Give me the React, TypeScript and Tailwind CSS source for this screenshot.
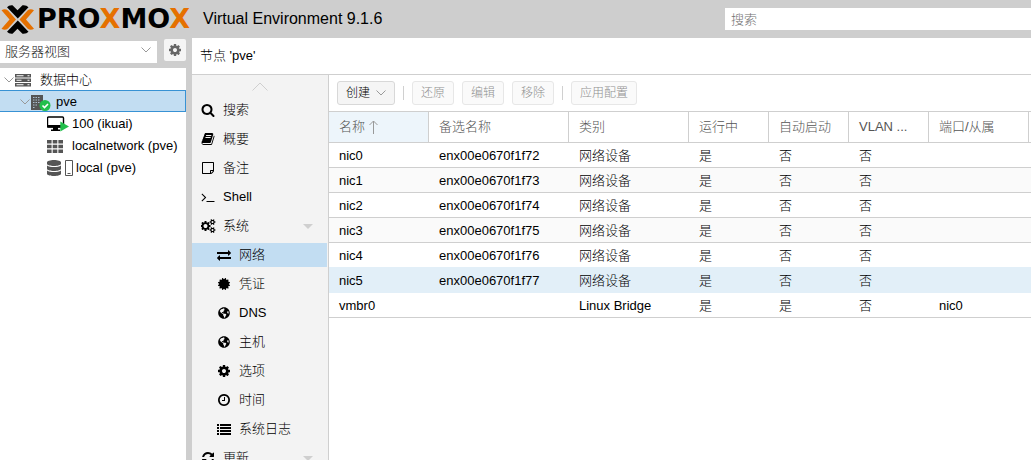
import { useState } from 'react'
import type { ReactNode } from 'react'
import { FaCertificate, FaDatabase, FaGlobeAmericas } from 'react-icons/fa'
import { clsx } from 'clsx'

const paths = {
    search: 'M1216 832q0-185-131.5-316.5t-316.5-131.5-316.5 131.5-131.5 316.5 131.5 316.5 316.5 131.5 316.5-131.5 131.5-316.5zm512 832q0 52-38 90t-90 38q-54 0-90-38l-343-342q-179 124-399 124-143 0-273.5-55.5t-225-150-150-225-55.5-273.5 55.5-273.5 150-225 225-150 273.5-55.5 273.5 55.5 225 150 150 225 55.5 273.5q0 220-124 399l343 343q37 37 37 90z',
    book: 'M1703 478q40 57 18 129l-275 906q-19 64-76.5 107.5t-122.5 43.5h-923q-77 0-148.5-53.5t-99.5-131.5q-24-67-2-127 0-4 3-27t4-37q1-8-3-21.5t-3-19.5q2-11 8-21t16.5-23.5 16.5-23.5q23-38 45-91.5t30-91.5q3-10 .5-30t-.5-28q3-11 17-28t17-23q21-36 42-92t25-90q1-9-2.5-32t.5-28q4-13 22-30.5t22-22.5q19-26 42.5-84.5t27.5-96.5q1-8-3-25.5t-2-26.5q2-8 9-18t18-23 17-21q8-12 16.5-30.5t15-35 16-36 19.5-32 26.5-23.5 36-11.5 47.5 5.5l-1 3q38-9 51-9h761q74 0 114 56t18 130l-274 906q-36 119-71.5 153.5t-128.5 34.5h-869q-27 0-38 15-11 16-1 43 24 70 144 70h923q29 0 56-15.5t35-41.5l300-987q7-22 5-57 38 15 59 43zm-1064 2q-4 13 2 22.5t20 9.5h608q13 0 25.5-9.5t16.5-22.5l21-64q4-13-2-22.5t-20-9.5h-608q-13 0-25.5 9.5t-16.5 22.5zm-83 256q-4 13 2 22.5t20 9.5h608q13 0 25.5-9.5t16.5-22.5l21-64q4-13-2-22.5t-20-9.5h-608q-13 0-25.5 9.5t-16.5 22.5z',
    note: 'M1528 1280h-248v248q29-10 41-22l185-185q12-12 22-41zm-280-128h288v-896h-1280v1280h896v-288q0-40 28-68t68-28zm416-928v1024q0 40-20 88t-48 76l-184 184q-28 28-76 48t-88 20h-1024q-40 0-68-28t-28-68v-1344q0-40 28-68t68-28h1344q40 0 68 28t28 68z',
    terminal: 'M649 983l-466 466q-10 10-23 10t-23-10l-50-50q-10-10-10-23t10-23l393-393-393-393q-10-10-10-23t10-23l50-50q10-10 23-10t23 10l466 466q10 10 10 23t-10 23zm1079 457v64q0 14-9 23t-23 9h-960q-14 0-23-9t-9-23v-64q0-14 9-23t23-9h960q14 0 23 9t9 23z',
    exchange: 'M1792 1184v192q0 13-9.5 22.5t-22.5 9.5h-1376v192q0 13-9.5 22.5t-22.5 9.5q-12 0-24-10l-319-320q-9-9-9-22 0-14 9-23l320-320q9-9 23-9 13 0 22.5 9.5t9.5 22.5v192h1376q13 0 22.5 9.5t9.5 22.5zm0-544q0 14-9 23l-320 320q-9 9-23 9-13 0-22.5-9.5t-9.5-22.5v-192h-1376q-13 0-22.5-9.5t-9.5-22.5v-192q0-13 9.5-22.5t22.5-9.5h1376v-192q0-14 9-23t23-9q12 0 24 10l319 319q9 9 9 23z',
    cog: 'M1152 896q0-106-75-181t-181-75-181 75-75 181 75 181 181 75 181-75 75-181zm512-109v222q0 12-8 23t-20 13l-185 28q-19 54-39 91 35 50 107 138 10 12 10 25t-9 23q-27 37-99 108t-94 71q-12 0-26-9l-138-108q-44 23-91 38-16 136-29 186-7 28-36 28h-222q-14 0-24.5-8.5t-11.5-21.5l-28-184q-49-16-90-37l-141 107q-10 9-25 9-14 0-25-11-126-114-165-168-7-10-7-23 0-12 8-23 15-21 51-66.5t54-70.5q-27-50-41-99l-183-27q-13-2-21-12.5t-8-23.5v-222q0-12 8-23t19-13l186-28q14-46 39-92-40-57-107-138-10-12-10-24 0-10 9-23 26-36 98.5-107.5t94.5-71.5q13 0 26 10l138 107q44-23 91-38 16-136 29-186 7-28 36-28h222q14 0 24.5 8.5t11.5 21.5l28 184q49 16 90 37l142-107q9-9 24-9 13 0 25 10 129 119 165 170 7 8 7 22 0 12-8 23-15 21-51 66.5t-54 70.5q26 50 41 98l183 28q13 2 21 12.5t8 23.5z',
    clock: 'M1024 544v448q0 14-9 23t-23 9h-320q-14 0-23-9t-9-23v-64q0-14 9-23t23-9h224v-352q0-14 9-23t23-9h64q14 0 23 9t9 23zm416 352q0-148-73-273t-198-198-273-73-273 73-198 198-73 273 73 273 198 198 273 73 273-73 198-198 73-273zm224 0q0 209-103 385.5t-279.5 279.5-385.5 103-385.5-103-279.5-279.5-103-385.5 103-385.5 279.5-279.5 385.5-103 385.5 103 279.5 279.5 103 385.5z',
    list: 'M0 256h256v256h-256zM384 256h1408v256h-1408zM0 640h256v256h-256zM384 640h1408v256h-1408zM0 1024h256v256h-256zM384 1024h1408v256h-1408zM0 1408h256v256h-256zM384 1408h1408v256h-1408z',
    refresh: 'M1639 1056q0 5-1 7-64 268-268 434.5t-478 166.5q-146 0-282.5-55t-243.5-157l-129 129q-19 19-45 19t-45-19-19-45v-448q0-26 19-45t45-19h448q26 0 45 19t19 45-19 45l-137 137q71 66 161 102t187 36q134 0 250-65t186-179q11-17 53-117 8-23 30-23h192q13 0 22.5 9.5t9.5 22.5zm25-800v448q0 26-19 45t-45 19h-448q-26 0-45-19t-19-45 19-45l138-138q-148-137-349-137-134 0-250 65t-186 179q-11 17-53 117-8 23-30 23h-199q-13 0-22.5-9.5t-9.5-22.5v-7q65-268 270-434.5t480-166.5q146 0 284 55.5t245 156.5l130-129q19-19 45-19t45 19 19 45z',
}

function Icon({ name, className = 'size-[14px]' }: { name: keyof typeof paths; className?: string }) {
    return (
        <svg viewBox="0 0 1792 1792" fill="currentColor" className={className} aria-hidden="true">
            <path d={paths[name]} />
        </svg>
    )
}

function CogsIcon() {
    return (
        <svg viewBox="0 0 1920 1792" fill="currentColor" className="h-[14px] w-[15px]" aria-hidden="true">
            <path d="M832 896q0-106-75-181t-181-75-181 75-75 181 75 181 181 75 181-75 75-181zm768 512q0-52-38-90t-90-38-90 38-38 90q0 53 37.5 90.5t90.5 37.5 90.5-37.5 37.5-90.5zm0-1024q0-52-38-90t-90-38-90 38-38 90q0 53 37.5 90.5t90.5 37.5 90.5-37.5 37.5-90.5zm-384 421v185q0 10-7 19.5t-16 10.5l-155 24q-11 35-32 76 34 48 90 115 7 11 7 20 0 12-7 19-23 30-82.5 89.5t-78.5 59.5q-11 0-21-7l-115-90q-37 19-77 31-11 108-23 155-7 24-30 24h-186q-11 0-20-7.5t-10-17.5l-23-153q-34-10-75-31l-118 89q-7 7-20 7-11 0-21-8-144-133-144-160 0-9 7-19 10-14 41-53t47-61q-23-44-35-82l-152-24q-10-1-17-9.5t-7-19.5v-185q0-10 7-19.5t16-10.5l155-24q11-35 32-76-34-48-90-115-7-11-7-20 0-12 7-20 22-30 82-89t79-59q11 0 21 7l115 90q34-18 77-32 11-108 23-154 7-24 30-24h186q11 0 20 7.5t10 17.5l23 153q34 10 75 31l118-89q8-7 20-7 11 0 21 8 144 133 144 160 0 8-7 19-12 16-42 54t-45 60q23 48 34 82l152 23q10 2 17 10.5t7 19.5zm640 533v140q0 16-149 31-12 27-30 52 51 113 51 138 0 4-4 7-122 71-124 71-8 0-46-47t-52-68q-20 2-30 2t-30-2q-14 21-52 68t-46 47q-2 0-124-71-4-3-4-7 0-25 51-138-18-25-30-52-149-15-149-31v-140q0-16 149-31 13-29 30-52-51-113-51-138 0-4 4-7 4-2 35-20t59-34 30-16q8 0 46 46.5t52 67.5q20-2 30-2t30 2q51-71 92-112l6-2q4 0 124 70 4 3 4 7 0 25-51 138 17 23 30 52 149 15 149 31zm0-1024v140q0 16-149 31-12 27-30 52 51 113 51 138 0 4-4 7-122 71-124 71-8 0-46-47t-52-68q-20 2-30 2t-30-2q-14 21-52 68t-46 47q-2 0-124-71-4-3-4-7 0-25 51-138-18-25-30-52-149-15-149-31v-140q0-16 149-31 13-29 30-52-51-113-51-138 0-4 4-7 4-2 35-20t59-34 30-16q8 0 46 46.5t52 67.5q20-2 30-2t30 2q51-71 92-112l6-2q4 0 124 70 4 3 4 7 0 25-51 138 17 23 30 52 149 15 149 31z" />
        </svg>
    )
}

function Chevron({ className }: { className?: string }) {
    return (
        <svg viewBox="0 0 10 6" fill="none" stroke="currentColor" className={clsx('shrink-0', className)} aria-hidden="true">
            <path d="M.5.5 5 5 9.5.5" />
        </svg>
    )
}

function Logo() {
    return (
        <a href="#home" aria-label="Proxmox" className="flex w-[203px] shrink-0 items-center">
            <svg viewBox="0 0 36 34" className="h-[34px] w-9 shrink-0" fill="none" aria-hidden="true">
                <path d="M7 5.200Q9 2.800 12.500 3.200L17.500 8.200 22.500 3.200Q26.500 2.800 28.500 5.200L17.800 16.500Z" fill="#000" />
                <path d="M7 29.800Q9 32.200 12.500 31.800L17.500 26.800 22.500 31.800Q26.500 32.200 28.500 29.800L17.800 18.500Z" fill="#000" />
                <path d="M1.500 8.200Q5 6.200 8 8.500L16 17.500 8 26.500Q5 28.800 1.500 26.800L9.500 17.500Z" fill="#e57000" />
                <path d="M34 8.200Q30.500 6.200 27.500 8.500L19.500 17.500 27.500 26.500Q30.500 28.800 34 26.800L26 17.500Z" fill="#e57000" />
            </svg>
            <span className="pl-px font-['DejaVu_Sans',sans-serif] text-[27px] leading-[34px] font-bold text-black">
                PRO<span className="text-[#e57000]">X</span>MO<span className="text-[#e57000]">X</span>
            </span>
        </a>
    )
}

function ServerIcon() {
    return (
        <svg viewBox="0 0 16 14" className="h-[14px] w-4" fill="#555" aria-hidden="true">
            <path d="M0 1h16v3.500H0zM0 5.500h16v3.500H0zM0 10h16v3.500H0z" />
            <path d="M1.500 2.300h7v.9h-7zM1.500 6.800h5v.9h-5zM1.500 11.300h7v.9h-7zM12.500 2.300h2v.9h-2zM12.500 6.800h2v.9h-2zM12.500 11.300h2v.9h-2z" fill="#fff" />
        </svg>
    )
}

function NodeIcon() {
    return (
        <svg viewBox="0 0 20 17" className="h-[17px] w-5" aria-hidden="true">
            <path d="M0 1h12v15H0z" fill="#555" />
            <path
                d="M2 3h1.500v1H2zM4.500 3H6v1H4.500zM7 3h1.500v1H7zM2 5.500h1.500v1H2zM4.500 5.500H6v1H4.500zM7 5.500h1.500v1H7zM2 8h1.500v1H2zM4.500 8H6v1H4.500zM7 8h1.500v1H7zM2 10.500h1.500v1H2zM4.500 10.500H6v1H4.500zM2 13h1.500v1H2z"
                fill="#a9bfd0"
            />
            <circle cx="14" cy="11.500" r="5.500" fill="#21bf4b" />
            <path d="m11.500 11.500 2 2 3.500-3.500" fill="none" stroke="#fff" strokeWidth="1.600" />
        </svg>
    )
}

function VmIcon() {
    return (
        <svg viewBox="0 0 22 16" className="h-4 w-[22px]" aria-hidden="true">
            <path d="M1.500 1h14q1 0 1 1v8q0 1-1 1h-14q-1 0-1-1V2q0-1 1-1z" fill="#fff" stroke="#000" strokeWidth="1.400" />
            <path d="M0 9h17v2.500H0zM6 11h5v2.500h2V15H4v-1.500h2z" fill="#000" />
            <path d="M13.300 5.500v10l8.700-5z" fill="#21bf4b" />
        </svg>
    )
}

function GridIcon() {
    return (
        <svg viewBox="0 0 16 13" className="h-[13px] w-4" fill="#555" aria-hidden="true">
            <path d="M0 0h4.600v3.500H0zM5.700 0h4.600v3.500H5.700zM11.400 0H16v3.500h-4.600zM0 4.700h4.600v3.500H0zM5.700 4.700h4.600v3.500H5.700zM11.400 4.700H16v3.500h-4.600zM0 9.400h4.600v3.500H0zM5.700 9.400h4.600v3.500H5.700zM11.400 9.400H16v3.500h-4.600z" />
        </svg>
    )
}

function StorageIcon() {
    return (
        <span className="flex items-center gap-1 text-[#555]">
            <FaDatabase className="h-4 w-[14px]" />
            <svg viewBox="0 0 8 16" className="h-4 w-2" fill="none" stroke="currentColor" aria-hidden="true">
                <path d="M.5.5h7v15h-7zM2.500 13.500h3" />
            </svg>
        </span>
    )
}

type TreeNode = { label: string; icon: ReactNode; indent: string; gap: string; open?: boolean }

const tree: TreeNode[] = [
    { label: '数据中心', icon: <ServerIcon />, indent: 'pl-1', gap: 'gap-[9px]', open: true },
    { label: 'pve', icon: <NodeIcon />, indent: 'pl-5', gap: 'gap-[5px]', open: true },
    { label: '100 (ikuai)', icon: <VmIcon />, indent: 'pl-[47px]', gap: 'gap-[3px]' },
    { label: 'localnetwork (pve)', icon: <GridIcon />, indent: 'pl-[47px]', gap: 'gap-[9px]' },
    { label: 'local (pve)', icon: <StorageIcon />, indent: 'pl-[47px]', gap: 'gap-[3px]' },
]

type MenuItem = { label: string; icon: ReactNode; sub?: boolean; expandable?: boolean }

const menu: MenuItem[] = [
    { label: '搜索', icon: <Icon name="search" /> },
    { label: '概要', icon: <Icon name="book" /> },
    { label: '备注', icon: <Icon name="note" /> },
    { label: 'Shell', icon: <Icon name="terminal" /> },
    { label: '系统', icon: <CogsIcon />, expandable: true },
    { label: '网络', icon: <Icon name="exchange" />, sub: true },
    { label: '凭证', icon: <FaCertificate className="size-3" />, sub: true },
    { label: 'DNS', icon: <FaGlobeAmericas className="size-3" />, sub: true },
    { label: '主机', icon: <FaGlobeAmericas className="size-3" />, sub: true },
    { label: '选项', icon: <Icon name="cog" />, sub: true },
    { label: '时间', icon: <Icon name="clock" />, sub: true },
    { label: '系统日志', icon: <Icon name="list" />, sub: true },
    { label: '更新', icon: <Icon name="refresh" />, expandable: true },
]

const columns = [
    { label: '名称', width: 'w-[100px]' },
    { label: '备选名称', width: 'w-[140px]' },
    { label: '类别', width: 'w-[120px]' },
    { label: '运行中', width: 'w-20' },
    { label: '自动启动', width: 'w-20' },
    { label: 'VLAN ...', width: 'w-20' },
    { label: '端口/从属', width: 'w-[100px]' },
]

const rows = [
    ['nic0', 'enx00e0670f1f72', '网络设备', '是', '否', '否', ''],
    ['nic1', 'enx00e0670f1f73', '网络设备', '是', '否', '否', ''],
    ['nic2', 'enx00e0670f1f74', '网络设备', '是', '否', '否', ''],
    ['nic3', 'enx00e0670f1f75', '网络设备', '是', '否', '否', ''],
    ['nic4', 'enx00e0670f1f76', '网络设备', '是', '否', '否', ''],
    ['nic5', 'enx00e0670f1f77', '网络设备', '是', '否', '否', ''],
    ['vmbr0', '', 'Linux Bridge', '是', '是', '否', 'nic0'],
]

function ToolButton({ children, disabled }: { children: ReactNode; disabled?: boolean }) {
    return (
        <button
            disabled={disabled}
            className={clsx(
                'flex h-6 items-center gap-[6px] rounded-[3px] border px-2 text-xs',
                disabled ? 'border-[#e7e7e7] bg-[#fafafa] text-[#909090]' : 'border-[#d8d8d8] bg-[#f5f5f5] text-black'
            )}
        >
            {children}
        </button>
    )
}

function Separator() {
    return <span className="h-[14px] w-px bg-[#d0d0d0]" />
}

function ResourceTree() {
    const [selected, setSelected] = useState('pve')

    return (
        <aside className="flex w-[186px] shrink-0 flex-col">
            <div className="flex h-[30px] items-start justify-between pt-px">
                <div className="relative">
                    <select
                        aria-label="视图"
                        className="h-[22px] w-[157px] appearance-none bg-white pl-[5px] text-[13px] text-[#222]"
                    >
                        <option>服务器视图</option>
                    </select>
                    <Chevron className="pointer-events-none absolute top-2 right-[6px] h-[6px] w-[10px] text-[#999]" />
                </div>
                <button
                    aria-label="设置"
                    className="flex size-[22px] items-center justify-center rounded-[2px] bg-[#f5f5f5] text-[#666]"
                >
                    <Icon name="cog" />
                </button>
            </div>
            <ul className="flex-1 bg-white">
                {tree.map((node) => (
                    <li key={node.label}>
                        <button
                            onClick={() => setSelected(node.label)}
                            className={clsx(
                                'flex h-[22px] w-full items-center border-y border-r pt-[2px] text-[13px] whitespace-nowrap text-black',
                                node.indent,
                                node.gap,
                                selected === node.label ? 'border-[#3892d4] bg-[#c2ddf2]' : 'border-transparent'
                            )}
                        >
                            <span className="flex shrink-0 items-center gap-px">
                                {node.open && <Chevron className="h-[6px] w-[10px] text-[#999]" />}
                                {node.icon}
                            </span>
                            {node.label}
                        </button>
                    </li>
                ))}
            </ul>
        </aside>
    )
}

function NodeMenu() {
    return (
        <nav className="flex w-[137px] shrink-0 flex-col overflow-hidden border-r border-[#cfcfcf] bg-[#f3f3f3]">
            <div className="flex h-[23px] shrink-0 items-center justify-center">
                <svg viewBox="0 0 16 9" className="h-[9px] w-4" fill="none" stroke="#cfcfcf" aria-hidden="true">
                    <path d="M.5 8.500 8 1l7.500 7.500" />
                </svg>
            </div>
            <div className="flex flex-col gap-[5px]">
                {menu.map((item) => (
                    <a
                        key={item.label}
                        href={`#${item.label}`}
                        className={clsx(
                            'mr-px flex h-6 shrink-0 items-center gap-[7px] text-[13px] text-black',
                            item.sub ? 'pl-6' : 'pl-2',
                            item.label === '网络' && 'bg-[#c2ddf2]'
                        )}
                    >
                        <span className="flex w-4 shrink-0 justify-center">{item.icon}</span>
                        {item.label}
                        {item.expandable && (
                            <svg viewBox="0 0 10 5" className="mr-[14px] ml-auto h-[5px] w-[10px]" fill="#cfcfcf" aria-hidden="true">
                                <path d="M0 0h10L5 5z" />
                            </svg>
                        )}
                    </a>
                ))}
            </div>
        </nav>
    )
}

function NetworkTable() {
    return (
        <table className="w-full table-fixed border-separate border-spacing-0 text-left text-[13px]">
            <thead>
                <tr className="h-[31px] text-[#555]">
                    {columns.map((col, i) => (
                        <th
                            key={col.label}
                            className={clsx(
                                'border-r border-b border-[#cfcfcf] p-0 pl-[10px] font-light whitespace-nowrap',
                                col.width,
                                i === 0 && 'bg-[#edf5fb]'
                            )}
                        >
                            <span className="flex items-center gap-1">
                                {col.label}
                                {i === 0 && (
                                    <svg viewBox="0 0 9 14" className="h-[14px] w-[9px]" fill="none" stroke="#999" aria-hidden="true">
                                        <path d="M4.500 14V1M.5 5l4-4 4 4" />
                                    </svg>
                                )}
                            </span>
                        </th>
                    ))}
                    <th className="border-b border-[#cfcfcf] p-0" />
                </tr>
            </thead>
            <tbody>
                {rows.map((row, i) => (
                    <tr
                        key={row[0]}
                        className={clsx(
                            'h-[25px]',
                            row[0] === 'nic5' ? 'bg-[#e2eff8]' : i % 2 === 1 ? 'bg-[#fafafa]' : 'bg-white'
                        )}
                    >
                        {[...row, ''].map((cell, j) => (
                            <td
                                key={j}
                                className={clsx(
                                    'border-b p-0 pt-[2px] pl-[10px] whitespace-nowrap text-black',
                                    i === 4 || i === 5 ? 'border-[#e2eff8]' : 'border-[#cfcfcf]'
                                )}
                            >
                                {cell}
                            </td>
                        ))}
                    </tr>
                ))}
            </tbody>
        </table>
    )
}

export default function App() {
    return (
        <div className="flex h-screen flex-col overflow-hidden bg-[#cecece] font-['Liberation_Sans','Noto_Sans_CJK_SC',sans-serif] font-light">
            <header className="flex h-[38px] shrink-0 items-center justify-between">
                <div className="flex items-center">
                    <Logo />
                    <h1 className="text-base whitespace-nowrap text-black">Virtual Environment 9.1.6</h1>
                </div>
                <input
                    type="search"
                    aria-label="搜索"
                    placeholder="搜索"
                    className="h-[22px] w-[306px] bg-white px-[6px] text-[13px] placeholder:text-[#707070]"
                />
            </header>
            <div className="flex min-h-0 flex-1 gap-[6px]">
                <ResourceTree />
                <main className="flex min-w-0 flex-1 flex-col bg-white">
                    <h2 className="flex h-[37px] shrink-0 items-center border-b border-[#cfcfcf] pl-2 text-[13px] text-black">
                        节点 'pve'
                    </h2>
                    <div className="flex min-h-0 flex-1">
                        <NodeMenu />
                        <section className="min-w-0 flex-1">
                            <div className="flex h-[37px] items-center gap-2 border-b border-[#cfcfcf] pl-2">
                                <ToolButton>
                                    创建
                                    <Chevron className="h-[6px] w-[10px] text-[#999]" />
                                </ToolButton>
                                <Separator />
                                <ToolButton disabled>还原</ToolButton>
                                <ToolButton disabled>编辑</ToolButton>
                                <ToolButton disabled>移除</ToolButton>
                                <Separator />
                                <ToolButton disabled>应用配置</ToolButton>
                            </div>
                            <NetworkTable />
                        </section>
                    </div>
                </main>
            </div>
        </div>
    )
}
